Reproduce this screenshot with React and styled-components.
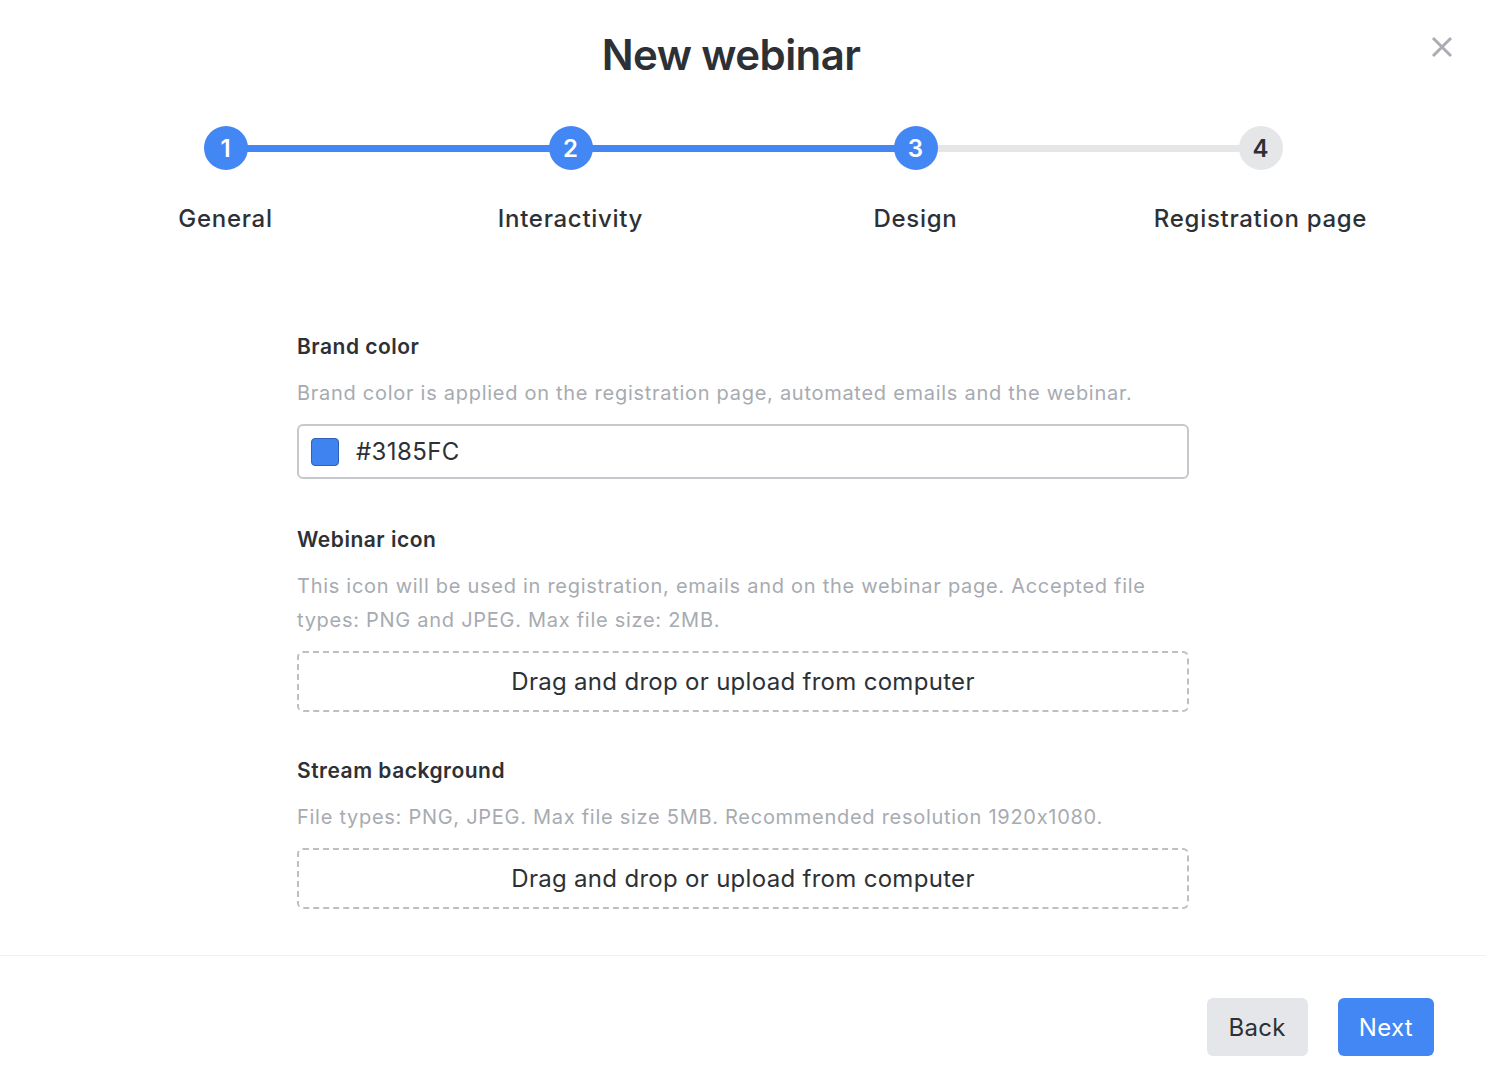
import React from "react";
import styled, { createGlobalStyle } from "styled-components";

const blue = "#4387f4";
const dark = "#2d3136";
const grey = "#a7abb1";

const GlobalStyle = createGlobalStyle`
  body {
    margin: 0;
    background: #fff;
    font-family: Inter, "Noto Sans", "Liberation Sans", sans-serif;
    font-feature-settings: "calt" 0;
    color: ${dark};
  }
`;

const Page = styled.div`
  position: relative;
  width: 1486px;
  height: 1086px;
  display: flex;
  flex-direction: column;
  overflow: hidden;
`;

const Title = styled.h1`
  margin: 30px 24px 0 0;
  font-size: 42px;
  line-height: 50px;
  font-weight: 600;
  text-align: center;
  letter-spacing: -0.6px;
`;

const CloseButton = styled.button`
  position: absolute;
  top: 36px;
  right: 33px;
  width: 22px;
  height: 22px;
  padding: 0;
  border: 0;
  background: none;
  cursor: pointer;
  svg { display: block; }
`;

const Stepper = styled.div`
  display: grid;
  grid-template-columns: repeat(4, 1fr);
  margin: 46px 53px 0;
`;

const Step = styled.div`
  position: relative;
  display: flex;
  flex-direction: column;
  align-items: center;
  &::after {
    content: "";
    display: ${p => (p.last ? "none" : "block")};
    position: absolute;
    top: 19px;
    left: 50%;
    width: 100%;
    height: 7px;
    background: ${p => (p.lineDone ? blue : "#e5e6e8")};
    z-index: 0;
  }
`;

const Circle = styled.div`
  position: relative;
  z-index: 1;
  width: 44px;
  height: 44px;
  border-radius: 50%;
  display: flex;
  align-items: center;
  justify-content: center;
  font-size: 24px;
  font-weight: 600;
  background: ${p => (p.done ? blue : "#e5e6e8")};
  color: ${p => (p.done ? "#fff" : dark)};
`;

const StepLabel = styled.div`
  margin-top: 34px;
  font-size: 24px;
  line-height: 30px;
  font-weight: 500;
  letter-spacing: 0.7px;
  white-space: nowrap;
`;

const Form = styled.div`
  width: 892px;
  margin: 99px auto 0;
  display: flex;
  flex-direction: column;
`;

const Field = styled.div`
  display: flex;
  flex-direction: column;
  margin-top: ${p => p.gap || 0}px;
`;

const Label = styled.div`
  font-size: 21px;
  line-height: 28px;
  font-weight: 600;
  letter-spacing: 0.5px;
  margin-bottom: 15px;
`;

const Description = styled.div`
  font-size: 20px;
  line-height: 34px;
  color: ${grey};
  letter-spacing: 0.72px;
  margin-bottom: 14px;
  padding-right: 30px;
`;

const ColorInput = styled.div`
  height: 55px;
  box-sizing: border-box;
  border: 2px solid #c5c8cc;
  border-radius: 6px;
  display: flex;
  align-items: center;
  gap: 17px;
  padding: 0 12px;
  font-size: 24px;
  letter-spacing: 0.4px;
`;

const Swatch = styled.span`
  width: 28px;
  height: 28px;
  box-sizing: border-box;
  border-radius: 4px;
  background: ${p => p.color};
  border: 1.5px solid #2e62b8;
`;

const DropZone = styled.div`
  height: 61px;
  box-sizing: border-box;
  border: 2px dashed #bcc0c5;
  border-radius: 6px;
  display: flex;
  align-items: center;
  justify-content: center;
  font-size: 24px;
  letter-spacing: 0.3px;
`;

const Footer = styled.div`
  margin-top: auto;
  border-top: 1px solid #f0f1f2;
  display: flex;
  justify-content: flex-end;
  gap: 30px;
  padding: 42px 52px 30px;
`;

const Button = styled.button`
  height: 58px;
  padding: 0 ${p => (p.primary ? "21px" : "22px")};
  min-width: ${p => (p.primary ? "96px" : "100px")};
  border: 0;
  border-radius: 6px;
  font-family: inherit;
  font-size: 24px;
  letter-spacing: 0.3px;
  background: ${p => (p.primary ? blue : "#e4e6e9")};
  color: ${p => (p.primary ? "#fff" : dark)};
  cursor: pointer;
`;

const steps = ["General", "Interactivity", "Design", "Registration page"];
const current = 3;

export default function App() {
  return (
    <Page>
      <GlobalStyle />
      <Title>New webinar</Title>
      <CloseButton aria-label="Close">
        <svg width="22" height="22" viewBox="0 0 22 22">
          <path d="M2 2L20 20M20 2L2 20" stroke="#a9adb3" strokeWidth="3" />
        </svg>
      </CloseButton>

      <Stepper>
        {steps.map((s, i) => (
          <Step key={s} last={i === steps.length - 1} lineDone={i + 1 < current}>
            <Circle done={i + 1 <= current}>{i + 1}</Circle>
            <StepLabel>{s}</StepLabel>
          </Step>
        ))}
      </Stepper>

      <Form>
        <Field>
          <Label>Brand color</Label>
          <Description>
            Brand color is applied on the registration page, automated emails and the webinar.
          </Description>
          <ColorInput>
            <Swatch color="#3f83f1" />
            #3185FC
          </ColorInput>
        </Field>
        <Field gap={47}>
          <Label>Webinar icon</Label>
          <Description>
            This icon will be used in registration, emails and on the webinar page. Accepted file
            types: PNG and JPEG. Max file size: 2MB.
          </Description>
          <DropZone>Drag and drop or upload from computer</DropZone>
        </Field>
        <Field gap={45}>
          <Label>Stream background</Label>
          <Description>
            File types: PNG, JPEG. Max file size 5MB. Recommended resolution 1920x1080.
          </Description>
          <DropZone>Drag and drop or upload from computer</DropZone>
        </Field>
      </Form>

      <Footer>
        <Button>Back</Button>
        <Button primary>Next</Button>
      </Footer>
    </Page>
  );
}
